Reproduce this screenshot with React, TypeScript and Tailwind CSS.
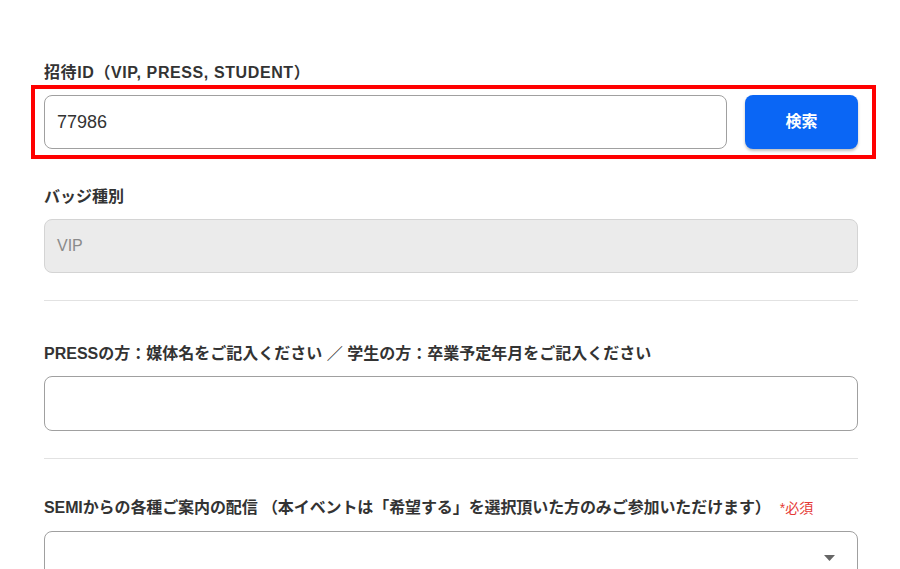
import React from "react";

const font = { fontFamily: '"Liberation Sans", "Noto Sans CJK JP", sans-serif' };

function Label({ children, className = "" }: { children: React.ReactNode; className?: string }) {
  return (
    <div className={"text-[16px] leading-[22px] font-bold text-[#333333] whitespace-nowrap " + className}>
      {children}
    </div>
  );
}

export default function App() {
  return (
    <div className="w-[900px] h-[569px] overflow-hidden bg-white" style={font}>
      <div className="pl-[44px] pr-[42px] pt-[62px]">
        <Label className="tracking-[0.6px]">招待ID（VIP, PRESS, STUDENT）</Label>
        <div className="relative mt-[11px]">
          <div className="flex gap-[18px]">
            <div className="flex-1 h-[54px] rounded-[8px] border border-[#a0a0a0] bg-white flex items-center px-[12px] text-[18px] text-[#333333]">
              77986
            </div>
            <button className="w-[113px] h-[54px] rounded-[8px] bg-[#0a66f5] text-white text-[16px] font-bold shadow-[0_2px_3px_rgba(0,0,0,0.25)]">
              検索
            </button>
          </div>
          <div className="absolute left-[-13px] right-[-18px] top-[-10px] bottom-[-10px] border-4 border-[#ff0000] pointer-events-none" />
        </div>

        <div className="mt-[37px]">
          <Label>バッジ種別</Label>
        </div>
        <div className="mt-[11px] h-[54px] rounded-[8px] border border-[#d4d4d4] bg-[#ebebeb] flex items-center px-[12px] text-[16px] text-[#8a8a8a]">
          VIP
        </div>

        <div className="mt-[27px] h-px bg-[#e2e2e2]" />

        <div className="mt-[42px]">
          <Label>PRESSの方：媒体名をご記入ください ／ 学生の方：卒業予定年月をご記入ください</Label>
        </div>
        <div className="mt-[11px] h-[55px] rounded-[8px] border border-[#a0a0a0] bg-white" />

        <div className="mt-[27px] h-px bg-[#e2e2e2]" />

        <div className="mt-[38px] flex items-baseline">
          <Label className="tracking-[-0.1px]">SEMIからの各種ご案内の配信 （本イベントは「希望する」を選択頂いた方のみご参加いただけます）</Label>
          <span className="ml-[9px] text-[14px] text-[#e53935]">*必須</span>
        </div>
        <div className="mt-[12px] h-[54px] rounded-[8px] border border-[#a0a0a0] bg-white flex items-center justify-end pr-[22px]">
          <svg width="11" height="6" viewBox="0 0 11 6">
            <polygon points="0,0 11,0 5.5,6" fill="#666666" />
          </svg>
        </div>
      </div>
    </div>
  );
}
